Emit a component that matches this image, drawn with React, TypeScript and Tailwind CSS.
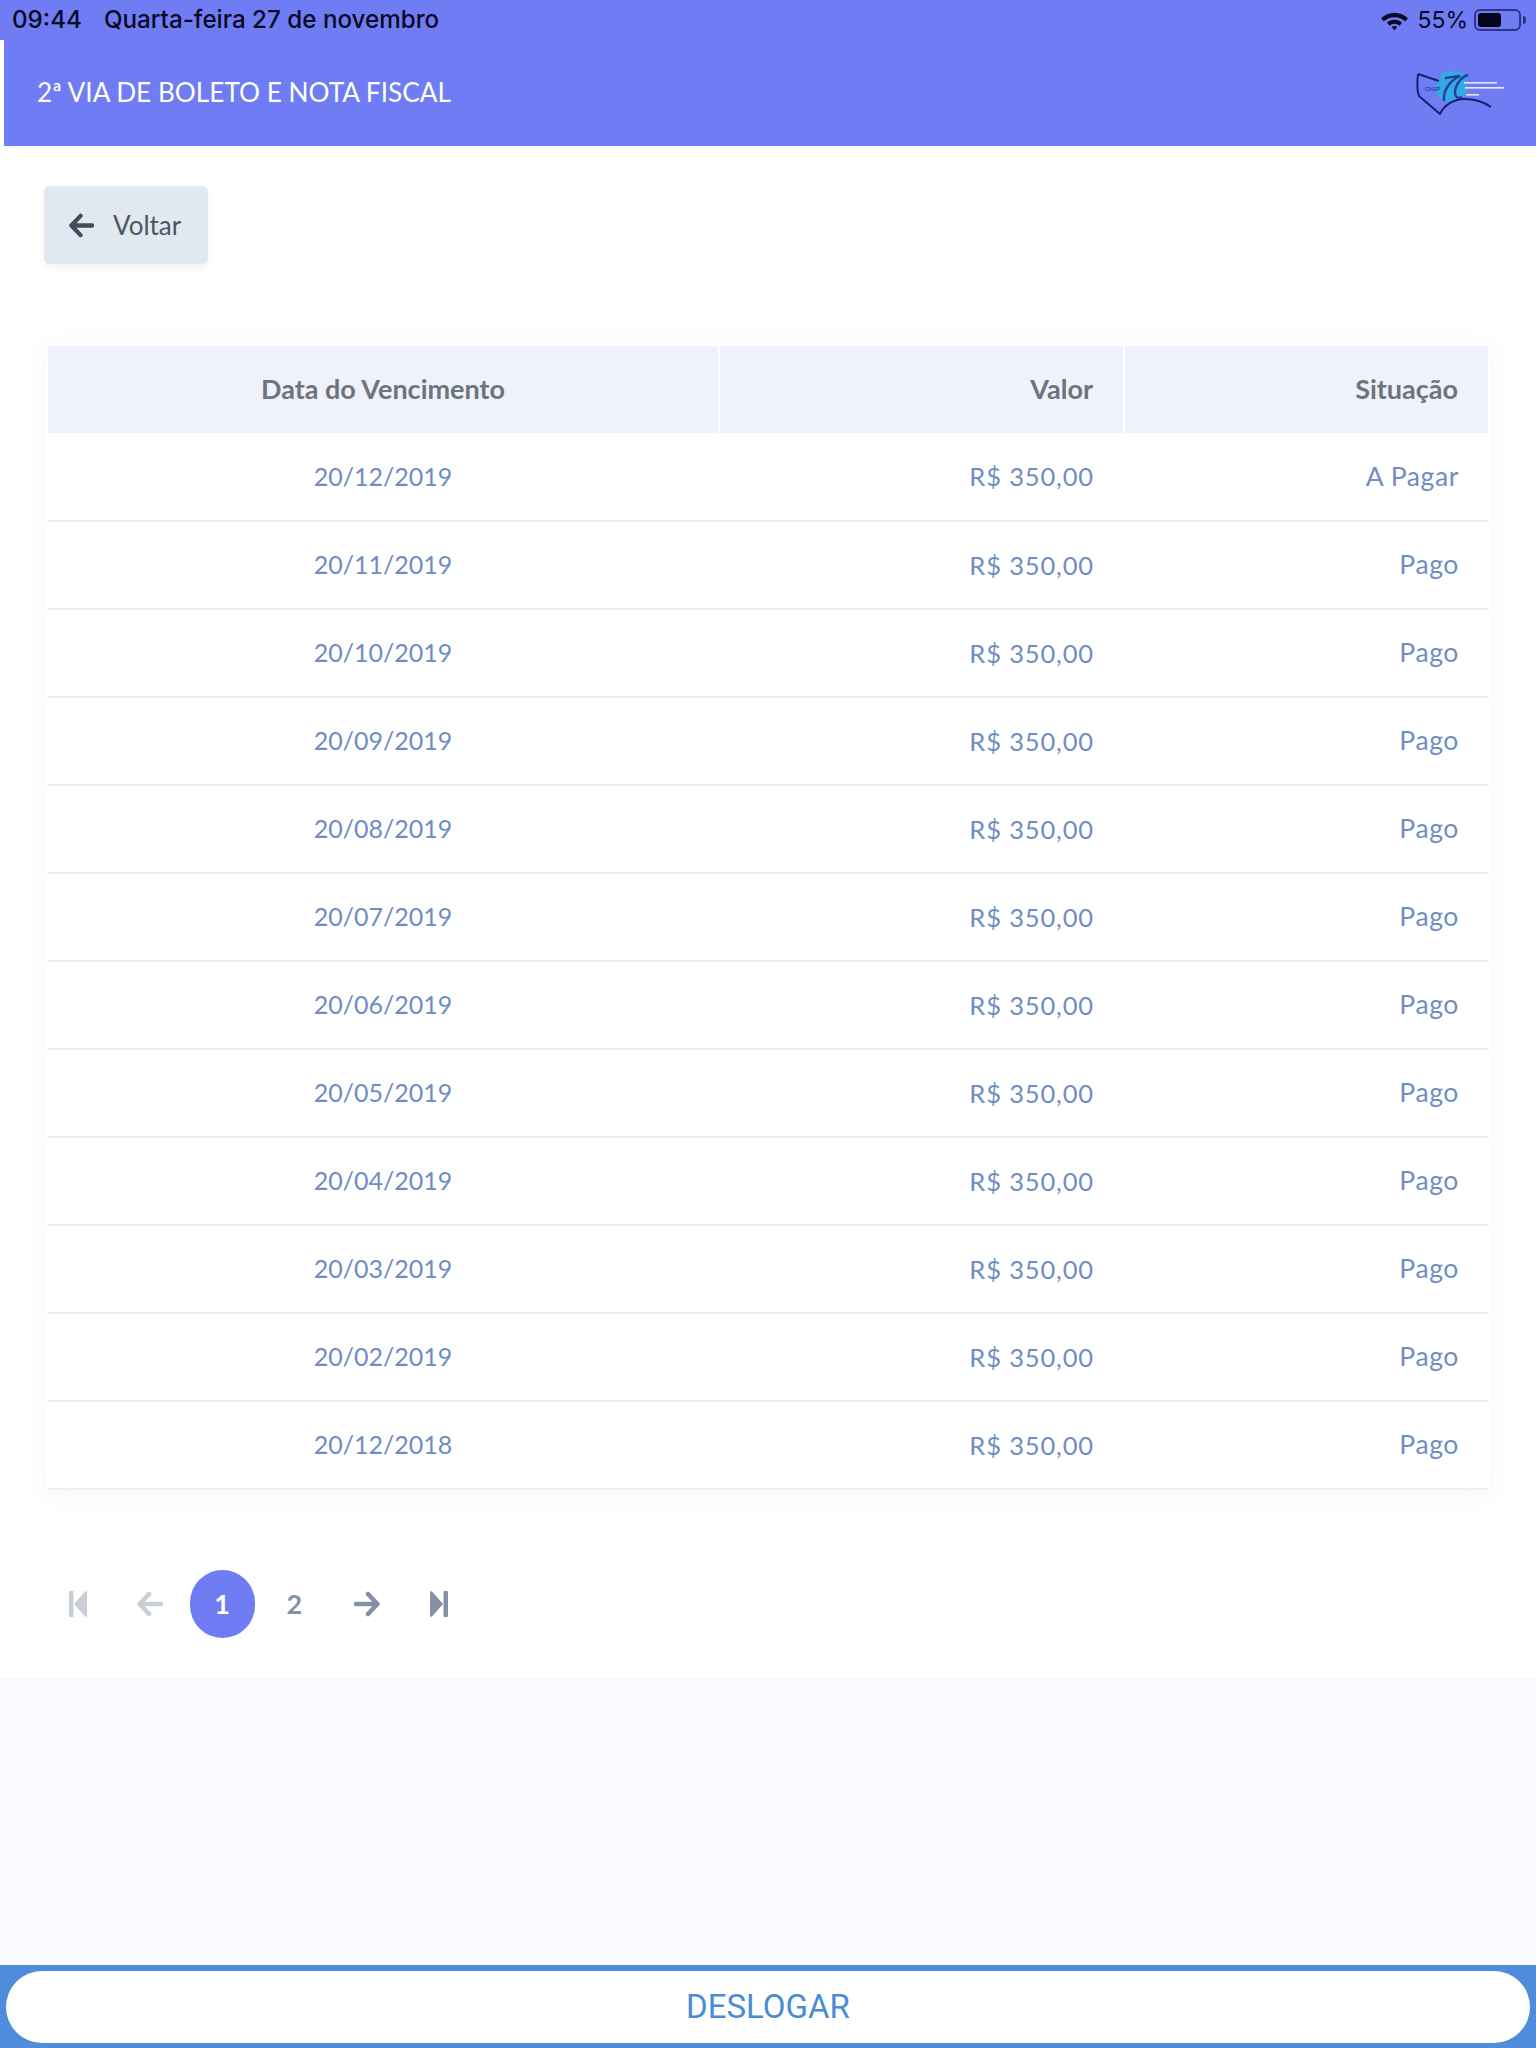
const rows = [
  ["20/12/2019", "R$ 350,00", "A Pagar"],
  ["20/11/2019", "R$ 350,00", "Pago"],
  ["20/10/2019", "R$ 350,00", "Pago"],
  ["20/09/2019", "R$ 350,00", "Pago"],
  ["20/08/2019", "R$ 350,00", "Pago"],
  ["20/07/2019", "R$ 350,00", "Pago"],
  ["20/06/2019", "R$ 350,00", "Pago"],
  ["20/05/2019", "R$ 350,00", "Pago"],
  ["20/04/2019", "R$ 350,00", "Pago"],
  ["20/03/2019", "R$ 350,00", "Pago"],
  ["20/02/2019", "R$ 350,00", "Pago"],
  ["20/12/2018", "R$ 350,00", "Pago"],
];

const ArrowLeft = ({ className }: { className: string }) => (
  <svg viewBox="0 0 26 26" className={className} fill="none" stroke="currentColor" strokeWidth="4.5" strokeLinecap="round" strokeLinejoin="round">
    <path d="M24 13H3M12 3L2.500 13L12 23" />
  </svg>
);

const ArrowRight = ({ className }: { className: string }) => (
  <svg viewBox="0 0 26 26" className={className} fill="none" stroke="currentColor" strokeWidth="4.5" strokeLinecap="round" strokeLinejoin="round">
    <path d="M2 13H23M14 3L23.500 13L14 23" />
  </svg>
);

const SkipFirst = () => (
  <svg viewBox="0 0 18 26" className="h-[26px] w-[18px] text-[#c9ced8]" fill="currentColor">
    <rect x="0" y="0" width="4.5" height="26" rx="1" />
    <path d="M18 1.500V24.500C18 25.600 16.800 26.200 16 25.400L5 13L16 0.600C16.800 -0.200 18 0.400 18 1.500Z" />
  </svg>
);

const SkipLast = () => (
  <svg viewBox="0 0 18 26" className="h-[26px] w-[18px] text-[#8490a6]" fill="currentColor">
    <rect x="13.5" y="0" width="4.5" height="26" rx="1" />
    <path d="M0 1.500V24.500C0 25.600 1.200 26.200 2 25.400L13 13L2 0.600C1.200 -0.200 0 0.400 0 1.500Z" />
  </svg>
);

const Logo = () => (
  <svg viewBox="0 0 90 48" className="h-12 w-[90px]">
    <path d="M23 9C26 2 34 0 38 3C45 1 52 4 50 12C54 20 49 29 41 30C35 34 25 33 22 27C18 22 19 14 23 9Z" fill="#35a8e6" />
    <path d="M2 5L23 12M2 5C1 14 1 22 3 27L24 45C28 36 38 30 48 30C58 30 68 33 75 38" fill="none" stroke="#15206e" strokeWidth="2" strokeLinejoin="round" />
    <path d="M28 32C27 22 33 12 44 7C40 7 34 9 29 9" fill="none" stroke="#1f3f9e" strokeWidth="2.400" />
    <path d="M52 6C45 8 39 16 39 24C39 28 42 30 46 28" fill="none" stroke="#1f3f9e" strokeWidth="2.400" />
    <text x="9" y="22" fontSize="5.500" fontFamily="Liberation Sans, sans-serif" fill="#1a2a80">CNSP</text>
    <rect x="48" y="13" width="33" height="1.600" fill="#dfe6ff" />
    <rect x="49" y="18" width="39" height="1.600" fill="#e8ecff" />
    <rect x="50" y="25" width="13" height="1.600" fill="#dfe6ff" />
  </svg>
);

const App = () => {
  return (
    <div className="flex h-[2048px] flex-col bg-white font-['Lato','Liberation_Sans',sans-serif]">
      {/* status bar */}
      <div className="flex h-10 shrink-0 items-center justify-between bg-[#6f7cf3] pl-3 pr-[10px] font-['Inter',sans-serif] text-[24.200px] font-medium text-[#0a0a24]">
        <div className="flex gap-[22px]">
          <span>09:44</span>
          <span>Quarta-feira 27 de novembro</span>
        </div>
        <div className="flex items-center">
          <svg viewBox="0 0 28 20" className="mr-[8px] h-[21px] w-[29px]" fill="#0a0a24">
            <path d="M14 2.500C19 2.500 23.500 4.500 27 7.800L24.400 10.800C21.600 8.300 18 6.800 14 6.800C10 6.800 6.400 8.300 3.600 10.800L1 7.800C4.500 4.500 9 2.500 14 2.500Z" />
            <path d="M14 9.300C16.800 9.300 19.400 10.400 21.300 12.200L18.800 15C17.500 13.800 15.800 13.100 14 13.100C12.200 13.100 10.500 13.800 9.200 15L6.700 12.200C8.600 10.400 11.200 9.300 14 9.300Z" />
            <path d="M14 15.200C15 15.200 16 15.600 16.700 16.300L14 19.500L11.300 16.300C12 15.600 13 15.200 14 15.200Z" />
          </svg>
          <span className="text-[23px] font-normal">55%</span>
          <div className="ml-[6px] flex items-center">
            <div className="flex h-[22px] w-[47px] items-center rounded-[6px] border-2 border-[#2f3585] p-[2px]">
              <div className="h-full w-[23px] rounded-[3px] bg-[#05051a]" />
            </div>
            <div className="ml-[2px] h-[8px] w-[3px] rounded-r-full bg-[#2f3585]" />
          </div>
        </div>
      </div>

      {/* header */}
      <div className="ml-1 flex h-[106px] shrink-0 items-center justify-between bg-[#6f7cf3] pl-[33px] pr-[30px]">
        <h1 className="text-[26.200px] font-normal text-white">2ª VIA DE BOLETO E NOTA FISCAL</h1>
        <Logo />
      </div>

      {/* content */}
      <div className="h-[1532px] shrink-0 bg-white">
        <div className="pl-[44px] pt-10">
          <button
            className="flex h-[78px] w-[164px] items-center gap-[19px] rounded-[6px] bg-[#e2e8f0] pl-[25px] text-[26px] text-[#4a5568] shadow-[0_4px_8px_rgba(0,0,0,0.05)]"
            type="button"
          >
            <ArrowLeft className="h-[25px] w-[25px] text-[#434b5c]" />
            Voltar
          </button>
        </div>

        <div className="ml-[46px] mr-[46px] mt-20 bg-white shadow-[0_4px_30px_rgba(0,0,0,0.04)]">
          <table className="w-full table-fixed border-collapse">
            <thead>
              <tr className="h-[88px] text-[27px] text-[#6e747c]">
                <th className="w-[672px] border-x-2 border-t-2 border-white bg-[#eff2fa] text-center font-bold">Data do Vencimento</th>
                <th className="w-[405px] border-r-2 border-t-2 border-white bg-[#eff2fa] pr-[30px] text-right font-bold">Valor</th>
                <th className="border-r-2 border-t-2 border-white bg-[#eff2fa] pr-[30px] text-right font-bold">Situação</th>
              </tr>
            </thead>
            <tbody>
              {rows.map((row) => (
                <tr key={row[0]} className="h-[88px] border-b-2 border-[#edf0f5] text-[#6f8dc1]">
                  <td className="text-center text-[25px]">{row[0]}</td>
                  <td className="pr-[30px] text-right text-[25.500px] tracking-[0.85px]">{row[1]}</td>
                  <td className="pr-[30px] text-right text-[26.500px] tracking-[0.6px]">{row[2]}</td>
                </tr>
              ))}
            </tbody>
          </table>
        </div>

        {/* pagination */}
        <div className="ml-[45px] mt-20 flex gap-[7.25px]">
          <div className="flex h-[68px] w-[65px] items-center justify-center"><SkipFirst /></div>
          <div className="flex h-[68px] w-[65px] items-center justify-center"><ArrowLeft className="h-[26px] w-[26px] text-[#c9ced8]" /></div>
          <div className="flex h-[68px] w-[65px] items-center justify-center rounded-full bg-[#6f7cf3] text-[27px] font-bold text-white">1</div>
          <div className="flex h-[68px] w-[65px] items-center justify-center text-[27px] font-bold text-[#8490a6]">2</div>
          <div className="flex h-[68px] w-[65px] items-center justify-center"><ArrowRight className="h-[26px] w-[26px] text-[#8490a6]" /></div>
          <div className="flex h-[68px] w-[65px] items-center justify-center"><SkipLast /></div>
        </div>
      </div>

      <div className="min-h-0 flex-1 bg-[#f9fafe]" />

      {/* footer */}
      <div className="flex h-[83px] shrink-0 bg-[#4f8ddb] px-[6px] pb-[5px] pt-[6px]">
        <button className="w-full rounded-full bg-white font-['Roboto',sans-serif] text-[33px] text-[#4a8bd6]" type="button">
          DESLOGAR
        </button>
      </div>
    </div>
  );
};

export default App;
